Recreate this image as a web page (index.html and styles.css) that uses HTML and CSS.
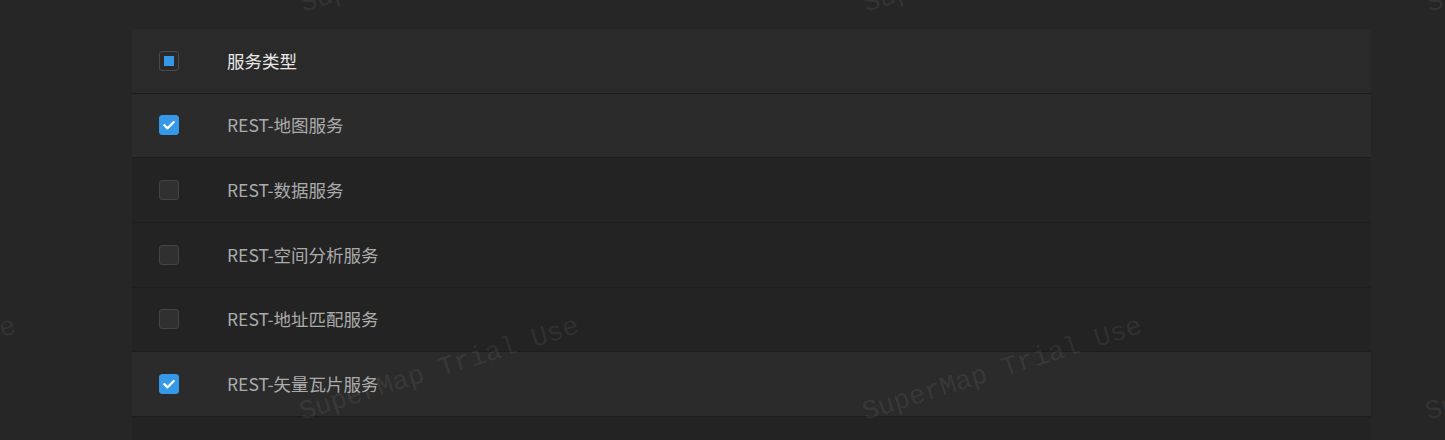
FILE: index.html
```html
<!DOCTYPE html>
<html lang="zh-CN">
<head>
<meta charset="utf-8">
<title>服务类型</title>
<link rel="stylesheet" href="styles.css">
</head>
<body>
<div class="page">
  <div class="table">
    <div class="row head">
      <div class="cell-check"><span class="cb indeterminate"><span class="dot"></span></span></div>
      <div class="cell-text">服务类型</div>
    </div>
    <div class="row selected">
      <div class="cell-check"><span class="cb checked"><svg viewBox="0 0 20 20" width="20" height="20"><path d="M5.3 10.2 L8.6 13.3 L14.7 7" fill="none" stroke="#fff" stroke-width="2.3" stroke-linecap="round" stroke-linejoin="round"/></svg></span></div>
      <div class="cell-text">REST-地图服务</div>
    </div>
    <div class="row">
      <div class="cell-check"><span class="cb"></span></div>
      <div class="cell-text">REST-数据服务</div>
    </div>
    <div class="row">
      <div class="cell-check"><span class="cb"></span></div>
      <div class="cell-text">REST-空间分析服务</div>
    </div>
    <div class="row">
      <div class="cell-check"><span class="cb"></span></div>
      <div class="cell-text">REST-地址匹配服务</div>
    </div>
    <div class="row selected">
      <div class="cell-check"><span class="cb checked"><svg viewBox="0 0 20 20" width="20" height="20"><path d="M5.3 10.2 L8.6 13.3 L14.7 7" fill="none" stroke="#fff" stroke-width="2.3" stroke-linecap="round" stroke-linejoin="round"/></svg></span></div>
      <div class="cell-text">REST-矢量瓦片服务</div>
    </div>
  </div>
</div>
<div class="watermarks">
  <span class="wm wm-a">SuperMap Trial Use</span>
  <span class="wm wm-b">SuperMap Trial Use</span>
  <span class="wm wm-c">SuperMap Trial Use</span>
  <span class="wm wm-d">SuperMap Trial Use</span>
  <span class="wm wm-e">SuperMap Trial Use</span>
  <span class="wm wm-f">SuperMap Trial Use</span>
  <span class="wm wm-g">SuperMap Trial Use</span>
  <span class="wm wm-h">SuperMap Trial Use</span>
</div>
</body>
</html>
```
FILE: styles.css
```css
html, body {
  margin: 0;
  padding: 0;
}
body {
  width: 1445px;
  height: 440px;
  overflow: hidden;
  background: #262626;
  font-family: "Noto Sans CJK SC", "Noto Sans", sans-serif;
  position: relative;
}
.page {
  padding: 29px 74px 0 132px;
  height: 411px;
}
.table {
  background: #232323;
  height: 100%;
  border-radius: 4px 4px 0 0;
  overflow: hidden;
}
.row {
  display: flex;
  align-items: center;
  height: 64.67px;
  box-sizing: border-box;
  border-bottom: 1px solid #1d1d1d;
}
.row.head {
  background: #2a2a2a;
}
.row.selected {
  background: #2b2b2b;
}
.cell-check {
  width: 95px;
  padding-left: 27px;
  box-sizing: border-box;
  display: flex;
  align-items: center;
}
.cell-text {
  font-size: 17.5px;
  color: #ababab;
  line-height: 24px;
}
.head .cell-text {
  color: #e8e8e8;
}
.cb {
  width: 20px;
  height: 20px;
  box-sizing: border-box;
  border: 1px solid #444;
  background: #303030;
  border-radius: 3px;
  display: flex;
  align-items: center;
  justify-content: center;
}
.cb.checked {
  background: #3598e8;
  border-color: #3598e8;
}
.cb.checked svg {
  display: block;
  flex: none;
}
.cb.indeterminate {
  background: #2a2a2a;
  border-color: #4a4a4a;
}
.cb .dot {
  width: 10px;
  height: 10px;
  background: #3598e8;
}
.watermarks {
  position: absolute;
  inset: 0;
  pointer-events: none;
  overflow: hidden;
}
.wm {
  position: absolute;
  font-family: "Liberation Mono", "DejaVu Sans Mono", monospace;
  font-size: 27px;
  line-height: 27px;
  white-space: nowrap;
  color: rgba(255, 255, 255, 0.08);
  transform-origin: 0 22px;
  transform: rotate(-17.5deg);
}
.wm-a { left: -260px; top: 400px; }
.wm-b { left: 303px; top: 400px; }
.wm-c { left: 866px; top: 400px; }
.wm-d { left: 1429px; top: 400px; }
.wm-e { left: -259px; top: -8px; }
.wm-f { left: 304px; top: -8px; }
.wm-g { left: 867px; top: -8px; }
.wm-h { left: 1430px; top: -8px; }
```
